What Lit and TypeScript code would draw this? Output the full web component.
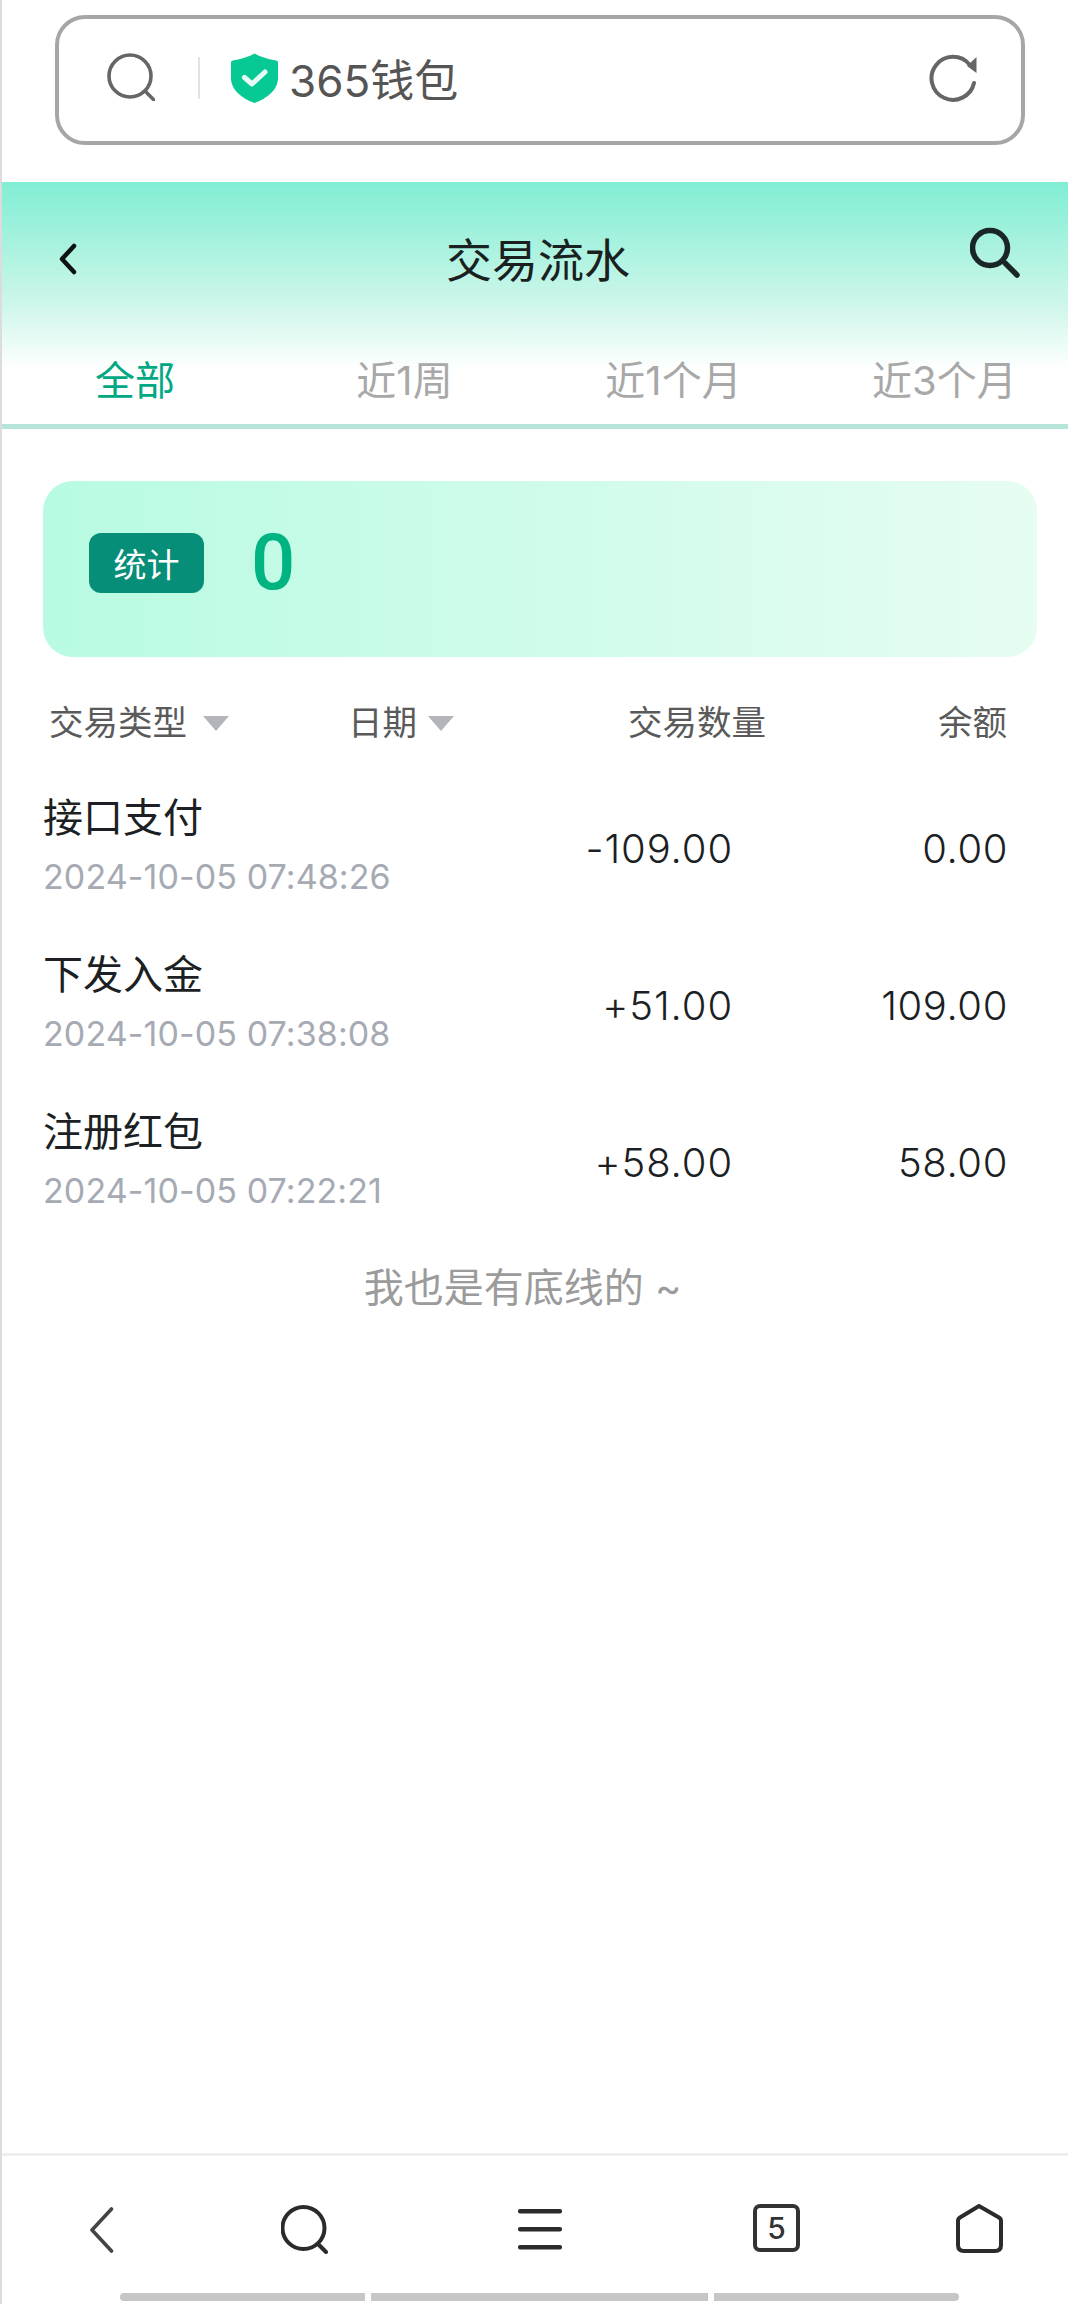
import { LitElement, html, css } from "lit";
import { customElement } from "lit/decorators.js";

const ROWS = [
  { name: "接口支付", date: "2024-10-05 07:48:26", amount: "-109.00", balance: "0.00" },
  { name: "下发入金", date: "2024-10-05 07:38:08", amount: "+51.00", balance: "109.00" },
  { name: "注册红包", date: "2024-10-05 07:22:21", amount: "+58.00", balance: "58.00" },
];

@customElement("app-root")
export class AppRoot extends LitElement {
  static styles = css`
    :host {
      display: block;
      width: 1068px;
      height: 2304px;
      font-family: Inter, "Noto Sans CJK SC", sans-serif;
      background: #fff;
    }
    * { box-sizing: border-box; }
    .page {
      height: 2304px;
      display: flex;
      flex-direction: column;
      border-left: 2px solid #dcdcdc;
      overflow: hidden;
    }
    .top { padding: 15px 43px 37px 53px; height: 182px; }
    .addr {
      height: 130px;
      border: 4px solid #a6a6a6;
      border-radius: 30px;
      display: flex;
      align-items: center;
      padding: 0 43px 0 48px;
      color: #555;
      font-size: 44px;
    }
    .addr-search { width: 48px; height: 48px; margin-top: -6px; }
    .sep { width: 2px; height: 42px; background: #e2e2e2; margin: -4px 31px 0 43px; }
    .shield { width: 47px; height: 50px; margin-top: -4px; }
    .site { margin-left: 11px; line-height: 50px; margin-top: 2px; }
    .refresh { width: 50px; height: 50px; margin-left: auto; margin-top: -4px; }
    .head {
      margin-left: -2px;
      height: 247px;
      background: linear-gradient(180deg, #80eed3 0%, #cdf6ea 50%, #ffffff 78%);
      border-bottom: 5px solid #b6e6d9;
    }
    .nav {
      height: 156px;
      display: flex;
      align-items: center;
      justify-content: space-between;
      padding: 0 46px 0 58px;
      position: relative;
    }
    .back { width: 22px; height: 32px; margin-top: -2px; }
    .title {
      position: absolute;
      left: 8px; right: 0;
      text-align: center;
      font-size: 46px;
      line-height: 58px;
      color: #1a1f1f;
    }
    .nav-search { width: 52px; height: 52px; margin-top: -16px; }
    .tabs {
      display: grid;
      grid-template-columns: 270px 269px 269px 260px;
      height: 86px;
      align-items: center;
      font-size: 40px;
      color: #a8a8a8;
      line-height: 50px;
    }
    .tabs span { justify-self: center; }
    .tabs .on { color: #00a983; }
    .tabs .last { justify-self: start; padding-left: 64px; }
    .card {
      margin: 52px 31px 0 41px;
      height: 176px;
      border-radius: 30px;
      background: linear-gradient(90deg, #b8fbe2 0%, #e6fdf1 100%);
      display: flex;
      align-items: center;
      padding: 0 0 12px 46px;
    }
    .badge {
      width: 115px;
      height: 60px;
      border-radius: 12px;
      background: #078e78;
      color: #fff;
      font-size: 33px;
      display: flex;
      align-items: center;
      justify-content: center;
    }
    .zero {
      margin-left: 47px;
      font-family: Roboto, sans-serif;
      font-size: 78px;
      font-weight: 500;
      line-height: 76px;
      color: #00b482;
    }
    .cols {
      margin: 46px 61px 0 0;
      height: 40px;
      display: grid;
      grid-template-columns: 346px 200px 217px 1fr;
      align-items: center;
      font-size: 34.500px;
      line-height: 40px;
      color: #5a5a5a;
    }
    .cols > div { display: flex; align-items: center; }
    .c1 { padding-left: 47px; }
    .c3 { padding-left: 80px; white-space: nowrap; }
    .c4 { justify-content: flex-end; }
    .tri { width: 28px; height: 16px; margin-left: 15px; }
    .c2 .tri { margin-left: 10px; }
    .rows { margin-top: 51px; padding: 0 60px 0 41px; }
    .row { height: 157px; display: flex; align-items: flex-start; }
    .left { width: 470px; }
    .name { font-size: 40px; line-height: 48px; color: #1c1f24; }
    .date { font-size: 34px; letter-spacing: 0.1px; line-height: 40px; margin-top: 15px; color: #a6aab3; white-space: nowrap; }
    .amt, .bal { font-size: 40px; font-weight: 300; line-height: 48px; color: #1c1f24; text-align: right; padding-top: 31px; }
    .amt { width: 220px; letter-spacing: 0.9px; }
    .bal { flex: 1; letter-spacing: 0.6px; }
    .end {
      text-align: center;
      font-size: 40px;
      line-height: 46px;
      color: #9b9b9b;
      padding-right: 25px;
    }
    .spacer { flex: 1; }
    .bottom {
      height: 151px;
      margin-left: -2px;
      border-top: 3px solid #eeeeee;
      padding-top: 48px;
    }
    .icons {
      display: grid;
      grid-template-columns: 191px 237px 235px 203px 1fr;
      padding-left: 90px;
      height: 51px;
      align-items: start;
    }
    .i1 { width: 24px; height: 46px; margin-top: 3px; }
    .i2 { width: 48px; height: 50px; }
    .i3 { width: 44px; height: 44px; margin-top: 5px; }
    .i4 {
      width: 47px;
      height: 48px;
      border: 4px solid #333;
      border-radius: 7px;
      display: flex;
      align-items: center;
      justify-content: center;
      font-size: 30px;
      font-weight: 500;
      line-height: 1;
      color: #333;
    }
    .i5 { width: 47px; height: 50px; }
    .scroll {
      margin: 38px 0 0 120px;
      display: flex;
      gap: 6px;
    }
    .scroll i { height: 8px; background: #c6c6c6; display: block; }
    .scroll i:nth-child(1) { width: 245px; border-radius: 4px 0 0 4px; }
    .scroll i:nth-child(2) { width: 337px; }
    .scroll i:nth-child(3) { width: 245px; border-radius: 0 4px 4px 0; }
  `;

  tri() {
    return html`<svg class="tri" viewBox="0 0 28 16"><path d="M1 1h26L14 16z" fill="#b4b5ba"/></svg>`;
  }

  render() {
    return html`
      <div class="page">
        <div class="top">
          <div class="addr">
            <svg class="addr-search" viewBox="0 0 48 48" fill="none" stroke="#666" stroke-width="3.6" stroke-linecap="round">
              <circle cx="23" cy="23" r="21"/><path d="M38 38l9 9"/>
            </svg>
            <div class="sep"></div>
            <svg class="shield" viewBox="0 0 47 50">
              <path d="M23.500 0.500C29 3.500 36 6 45 7.500C46.500 7.800 47 8.500 47 10V25C47 37 36 45.500 23.500 50C11 45.500 0 37 0 25V10C0 8.500 .5 7.800 2 7.500C11 6 18 3.500 23.500 .5z" fill="#07c993"/>
              <path d="M13.500 24.500L21 31L34 19" fill="none" stroke="#e9fbf5" stroke-width="5" stroke-linecap="round" stroke-linejoin="round"/>
            </svg>
            <span class="site">365钱包</span>
            <svg class="refresh" viewBox="0 0 50 50" fill="none" stroke="#666" stroke-width="4" stroke-linecap="round" stroke-linejoin="round">
              <path d="M41.500 11.500A21.500 21.500 0 1 0 46 30"/>
              <path d="M48.500 4V20L39 13z" fill="#666" stroke="none"/>
            </svg>
          </div>
        </div>

        <div class="head">
          <div class="nav">
            <svg class="back" viewBox="0 0 22 32" fill="none" stroke="#0d1212" stroke-width="4.500" stroke-linecap="round" stroke-linejoin="round">
              <path d="M16 3L4 16l12 13"/>
            </svg>
            <div class="title">交易流水</div>
            <svg class="nav-search" viewBox="0 0 52 52" fill="none" stroke="#1a2626" stroke-width="5.500" stroke-linecap="round">
              <circle cx="20" cy="22" r="17.500"/><path d="M35 37l12 12"/>
            </svg>
          </div>
          <div class="tabs">
            <span class="on">全部</span><span>近1周</span><span>近1个月</span><span class="last">近3个月</span>
          </div>
        </div>

        <div class="card">
          <div class="badge">统计</div>
          <div class="zero">0</div>
        </div>

        <div class="cols">
          <div class="c1">交易类型${this.tri()}</div>
          <div class="c2">日期${this.tri()}</div>
          <div class="c3">交易数量</div>
          <div class="c4">余额</div>
        </div>

        <div class="rows">
          ${ROWS.map(
            (r) => html`
              <div class="row">
                <div class="left">
                  <div class="name">${r.name}</div>
                  <div class="date">${r.date}</div>
                </div>
                <div class="amt">${r.amount}</div>
                <div class="bal">${r.balance}</div>
              </div>
            `
          )}
        </div>

        <div class="end">我也是有底线的 ~</div>
        <div class="spacer"></div>

        <div class="bottom">
          <div class="icons">
            <svg class="i1" viewBox="0 0 24 46" fill="none" stroke="#444" stroke-width="3.600" stroke-linecap="round" stroke-linejoin="round">
              <path d="M21.500 2L2 23l19.500 21"/>
            </svg>
            <svg class="i2" viewBox="0 0 48 50" fill="none" stroke="#2b2b2b" stroke-width="4" stroke-linecap="round">
              <circle cx="22.500" cy="24" r="21"/><path d="M37 40l8 8"/>
            </svg>
            <svg class="i3" viewBox="0 0 44 44" fill="#2b2b2b">
              <rect x="0" y="0" width="44" height="4.500" rx="2"/><rect x="0" y="18" width="44" height="4.500" rx="2"/><rect x="0" y="36" width="44" height="4.500" rx="2"/>
            </svg>
            <div class="i4">5</div>
            <svg class="i5" viewBox="0 0 47 50" fill="none" stroke="#2b2b2b" stroke-width="4" stroke-linejoin="round">
              <path d="M23 2L43 13.500q2 1.200 2 3.500V41q0 6-6 6H8q-6 0-6-6V17q0-2.300 2-3.500z"/>
            </svg>
          </div>
          <div class="scroll"><i></i><i></i><i></i></div>
        </div>
      </div>
    `;
  }
}
